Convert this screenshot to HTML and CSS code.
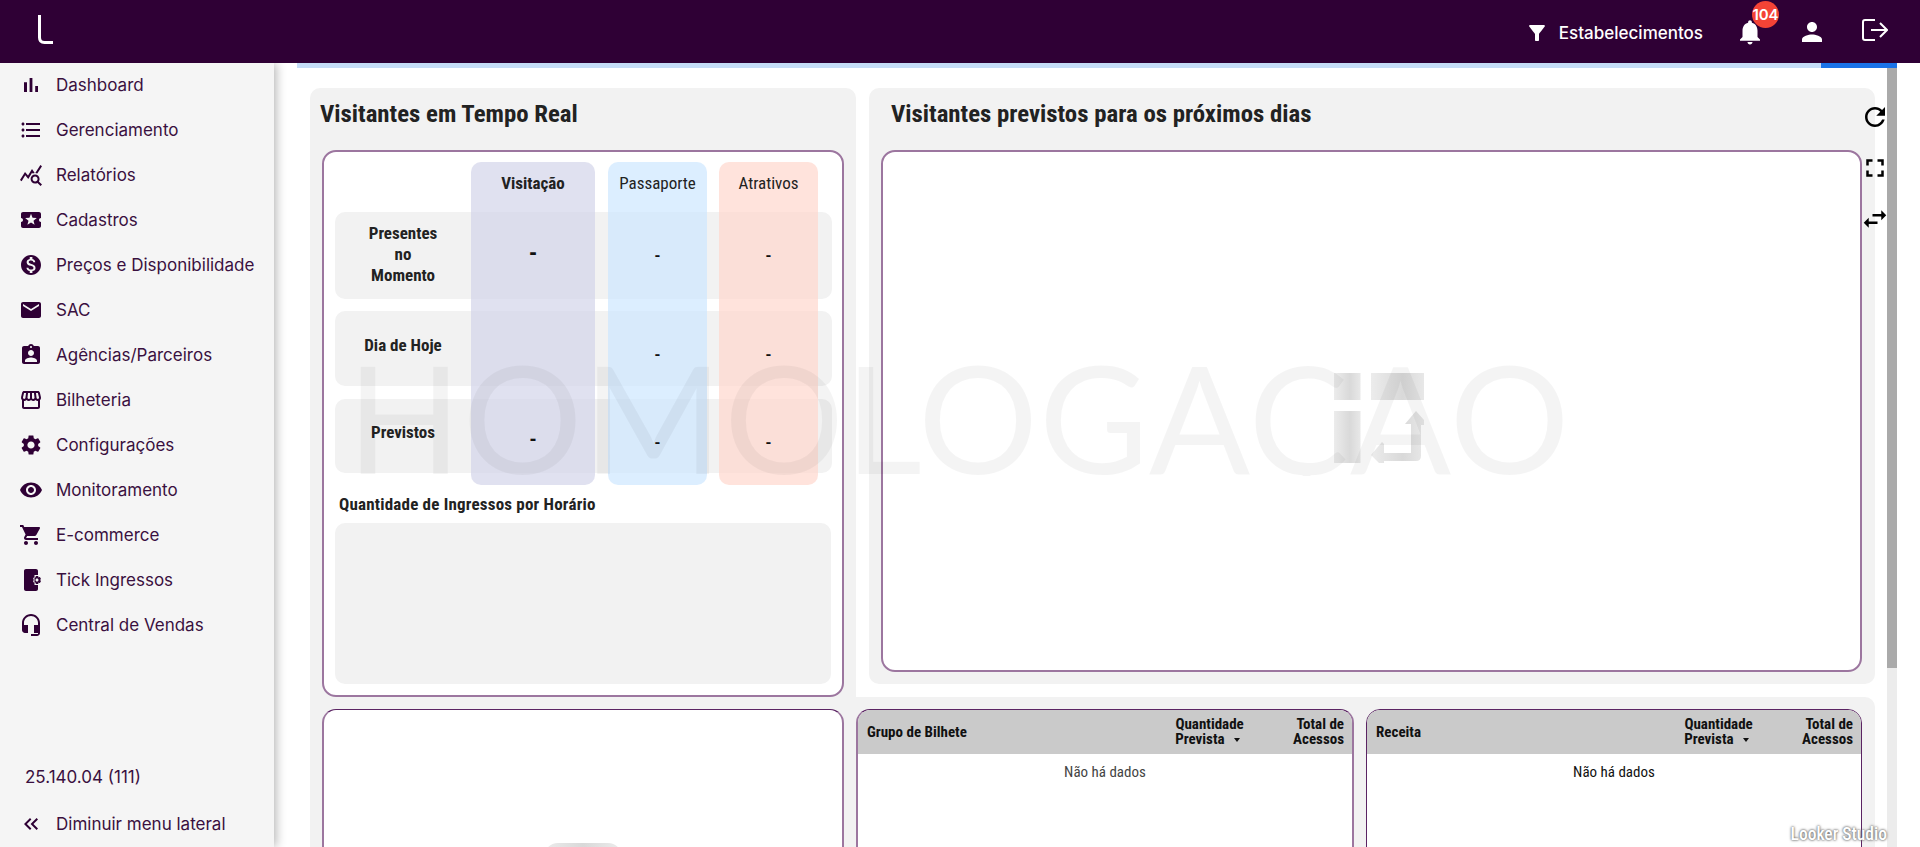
FILE: index.html
```html
<!DOCTYPE html>
<html lang="pt-BR">
<head>
  <meta charset="UTF-8" />
  <title>Dashboard</title>
  <link rel="stylesheet" href="styles.css">
</head>
<body>
  <header class="topbar">
    <svg class="logo" viewBox="0 0 15 29"><path d="M1.5 0v22.5q0 5 5 5H15" /></svg>
    <div class="topbar-actions">
      <button class="filter-btn">
        <svg class="icon" viewBox="0 0 24 24"><path d="M4.25 5.61C6.27 8.2 10 13 10 13v6c0 .55.45 1 1 1h2c.55 0 1-.45 1-1v-6s3.72-4.8 5.74-7.39c.51-.66.04-1.61-.79-1.61H5.04c-.83 0-1.3.95-.79 1.61z"/></svg>
        Estabelecimentos
      </button>
      <div class="bell">
        <svg class="icon-lg" viewBox="0 0 24 24"><path d="M12 22c1.1 0 2-.9 2-2h-4c0 1.1.89 2 2 2zm6-6v-5c0-3.07-1.64-5.64-4.5-6.32V4c0-.83-.67-1.5-1.5-1.5s-1.5.67-1.5 1.5v.68C7.63 5.36 6 7.92 6 11v5l-2 2v1h16v-1l-2-2z"/></svg>
        <span class="badge">104</span>
      </div>
      <svg class="icon-lg user" viewBox="0 0 24 24"><path d="M12 12c2.21 0 4-1.79 4-4s-1.79-4-4-4-4 1.79-4 4 1.79 4 4 4zm0 2c-2.67 0-8 1.34-8 4v2h16v-2c0-2.66-5.33-4-8-4z"/></svg>
      <svg class="logout" viewBox="0 0 26 22"><path d="M13 1H3q-2 0-2 2v16q0 2 2 2h10M9 11h16M18 4l7 7-7 7" /></svg>
    </div>
  </header>

  <div class="layout">
    <aside class="sidebar">
      <nav class="menu">
        <a class="menu-item"><svg viewBox="0 0 24 24"><path d="M5 9.2h3V19H5zM10.6 5h2.8v14h-2.8zm5.6 8H19v6h-2.8z"/></svg>Dashboard</a>
        <a class="menu-item"><svg viewBox="0 0 24 24"><path d="M4 10.5c-.83 0-1.5.67-1.5 1.5s.67 1.5 1.5 1.5 1.5-.67 1.5-1.5-.67-1.5-1.5-1.5zm0-6c-.83 0-1.5.67-1.5 1.5S3.17 7.5 4 7.5 5.5 6.83 5.5 6 4.83 4.5 4 4.5zm0 12c-.83 0-1.5.68-1.5 1.5s.68 1.5 1.5 1.5 1.5-.68 1.5-1.5-.67-1.5-1.5-1.5zM7 19h14v-2H7v2zm0-6h14v-2H7v2zm0-8v2h14V5H7z"/></svg>Gerenciamento</a>
        <a class="menu-item"><svg viewBox="0 0 24 24"><path d="M19.88 18.47c.44-.7.7-1.51.7-2.39 0-2.49-2.01-4.5-4.5-4.5s-4.5 2.01-4.5 4.5 2.01 4.5 4.49 4.5c.88 0 1.7-.26 2.39-.7L21.58 23 23 21.58l-3.12-3.11zm-3.8.11c-1.38 0-2.5-1.12-2.5-2.5s1.12-2.5 2.5-2.5 2.5 1.12 2.5 2.5-1.12 2.5-2.5 2.5zm-.36-8.5c-.74.02-1.45.18-2.1.45l-.55-.83-3.8 6.18-3.01-3.52-3.63 5.81L1 17l5-8 3 3.5L13 6l2.72 4.08zm2.59.5c-.64-.28-1.33-.45-2.05-.49L21.38 2 23 3.18l-4.69 7.4z"/></svg>Relatórios</a>
        <a class="menu-item"><svg viewBox="0 0 24 24"><path d="M20 12c0-1.1.9-2 2-2V6c0-1.1-.9-2-2-2H4c-1.1 0-1.99.9-1.99 2v4c1.1 0 1.99.9 1.99 2s-.89 2-2 2v4c0 1.1.9 2 2 2h16c1.1 0 2-.9 2-2v-4c-1.1 0-2-.9-2-2zm-4.42 4.8L12 14.5l-3.58 2.3 1.08-4.12-3.29-2.69 4.24-.25L12 5.8l1.54 3.95 4.24.25-3.29 2.69 1.09 4.11z"/></svg>Cadastros</a>
        <a class="menu-item"><svg viewBox="0 0 24 24"><path d="M12 2C6.48 2 2 6.48 2 12s4.48 10 10 10 10-4.48 10-10S17.52 2 12 2zm1.41 16.09V20h-2.67v-1.93c-1.71-.36-3.16-1.46-3.27-3.4h1.96c.1 1.05.82 1.87 2.65 1.87 1.96 0 2.4-.98 2.4-1.59 0-.83-.44-1.61-2.67-2.14-2.48-.6-4.18-1.62-4.18-3.67 0-1.72 1.39-2.84 3.11-3.21V4h2.67v1.95c1.86.45 2.79 1.86 2.85 3.39H14.3c-.05-1.11-.64-1.87-2.22-1.87-1.5 0-2.4.68-2.4 1.64 0 .84.65 1.39 2.67 1.91s4.18 1.39 4.18 3.91c-.01 1.83-1.38 2.83-3.12 3.16z"/></svg>Preços e Disponibilidade</a>
        <a class="menu-item"><svg viewBox="0 0 24 24"><path d="M20 4H4c-1.1 0-1.99.9-1.99 2L2 18c0 1.1.9 2 2 2h16c1.1 0 2-.9 2-2V6c0-1.1-.9-2-2-2zm0 4l-8 5-8-5V6l8 5 8-5v2z"/></svg>SAC</a>
        <a class="menu-item"><svg viewBox="0 0 24 24"><path d="M19 3h-4.18C14.4 1.84 13.3 1 12 1c-1.3 0-2.4.84-2.82 2H5c-1.1 0-2 .9-2 2v14c0 1.1.9 2 2 2h14c1.1 0 2-.9 2-2V5c0-1.1-.9-2-2-2zm-7 0c.55 0 1 .45 1 1s-.45 1-1 1-1-.45-1-1 .45-1 1-1zm0 4c1.66 0 3 1.34 3 3s-1.34 3-3 3-3-1.34-3-3 1.34-3 3-3zm6 12H6v-1.4c0-2 4-3.1 6-3.1s6 1.1 6 3.1V19z"/></svg>Agências/Parceiros</a>
        <a class="menu-item"><svg viewBox="0 0 24 24"><path d="M21.9 8.89l-1.05-4.37c-.22-.9-1-1.52-1.91-1.52H5.05c-.9 0-1.69.63-1.9 1.52L2.1 8.89c-.24 1.02-.02 2.06.62 2.88.08.11.19.19.28.29V19c0 1.1.9 2 2 2h14c1.1 0 2-.9 2-2v-6.94c.09-.09.2-.18.28-.28.64-.82.87-1.87.62-2.89zm-2.99-3.9l1.05 4.37c.1.42.01.84-.25 1.17-.14.18-.44.47-.94.47-.61 0-1.14-.49-1.21-1.14L16.98 5l1.93-.01zM13 5h1.96l.54 4.52c.05.39-.07.78-.33 1.07-.22.26-.54.41-.95.41-.67 0-1.22-.59-1.22-1.31V5zM8.49 9.52L9.04 5H11v4.69c0 .72-.55 1.31-1.29 1.31-.34 0-.65-.15-.89-.41-.25-.29-.37-.68-.33-1.07zm-4.45-.16L5.05 5h1.97l-.58 4.86c-.08.65-.6 1.14-1.21 1.14-.49 0-.8-.29-.93-.47-.27-.32-.36-.75-.26-1.17zM5 19v-6.03c.08.01.15.03.23.03.87 0 1.66-.36 2.24-.95.6.6 1.4.95 2.31.95.87 0 1.65-.36 2.23-.93.59.57 1.39.93 2.29.93.84 0 1.64-.35 2.24-.95.58.59 1.37.95 2.24.95.08 0 .15-.02.23-.03V19H5z"/></svg>Bilheteria</a>
        <a class="menu-item"><svg viewBox="0 0 24 24"><path d="M19.14 12.94c.04-.3.06-.61.06-.94 0-.32-.02-.64-.07-.94l2.03-1.58c.18-.14.23-.41.12-.61l-1.92-3.32c-.12-.22-.37-.29-.59-.22l-2.39.96c-.5-.38-1.03-.7-1.62-.94l-.36-2.54c-.04-.24-.24-.41-.48-.41h-3.84c-.24 0-.43.17-.47.41l-.36 2.54c-.59.24-1.13.57-1.62.94l-2.39-.96c-.22-.08-.47 0-.59.22L2.74 8.87c-.12.21-.08.47.12.61l2.03 1.58c-.05.3-.09.63-.09.94s.02.64.07.94l-2.03 1.58c-.18.14-.23.41-.12.61l1.92 3.32c.12.22.37.29.59.22l2.39-.96c.5.38 1.03.7 1.62.94l.36 2.54c.05.24.24.41.48.41h3.84c.24 0 .44-.17.47-.41l.36-2.54c.59-.24 1.13-.56 1.62-.94l2.39.96c.22.08.47 0 .59-.22l1.92-3.32c.12-.22.07-.47-.12-.61l-2.01-1.58zM12 15.6c-1.98 0-3.6-1.62-3.6-3.6s1.62-3.6 3.6-3.6 3.6 1.62 3.6 3.6-1.62 3.6-3.6 3.6z"/></svg>Configurações</a>
        <a class="menu-item"><svg viewBox="0 0 24 24"><path d="M12 4.5C7 4.5 2.73 7.61 1 12c1.73 4.39 6 7.5 11 7.5s9.27-3.11 11-7.5c-1.73-4.39-6-7.5-11-7.5zM12 17c-2.76 0-5-2.24-5-5s2.24-5 5-5 5 2.24 5 5-2.24 5-5 5zm0-8c-1.66 0-3 1.34-3 3s1.34 3 3 3 3-1.34 3-3-1.34-3-3-3z"/></svg>Monitoramento</a>
        <a class="menu-item"><svg viewBox="0 0 24 24"><path d="M7 18c-1.1 0-1.99.9-1.99 2S5.9 22 7 22s2-.9 2-2-.9-2-2-2zM1 2v2h2l3.6 7.59-1.35 2.45c-.16.28-.25.61-.25.96 0 1.1.9 2 2 2h12v-2H7.42c-.14 0-.25-.11-.25-.25l.03-.12.9-1.63h7.45c.75 0 1.41-.41 1.75-1.03l3.58-6.47c.08-.14.12-.31.12-.48 0-.55-.45-1-1-1H5.21l-.94-2H1zm16 16c-1.1 0-1.99.9-1.99 2s.89 2 1.99 2 2-.9 2-2-.9-2-2-2z"/></svg>E-commerce</a>
        <a class="menu-item"><svg viewBox="0 0 24 24"><path d="M7 1h10c1.1 0 2 .9 2 2v4h-3.500v10H19v4c0 1.100-.9 2-2 2H7c-1.100 0-2-.9-2-2V3c0-1.100.9-2 2-2zM21.810 12.740l-.82-.63v-.22l.8-.63c.16-.12.2-.34.1-.51l-.85-1.480c-.08-.16-.3-.23-.5-.17l-.95.38-.19-.11-.15-1.010c-.03-.21-.2-.36-.4-.36h-1.710c-.2 0-.37.15-.4.34l-.14 1.010-.19.11-.95-.38c-.2-.06-.4 0-.5.17l-.85 1.480c-.1.17-.06.39.1.51l.8.63v.23l-.8.63c-.16.12-.2.34-.1.51l.85 1.480c.1.17.3.23.5.17l.95-.37.2.11.15 1.010c.03.2.2.34.4.34h1.710c.2 0 .37-.15.4-.34l.15-1.010.19-.11.95.38c.2.06.4 0 .5-.17l.85-1.480c.1-.17.06-.39-.1-.51zM18 13.500c-.83 0-1.500-.67-1.500-1.500s.67-1.500 1.500-1.500 1.500.67 1.500 1.500-.67 1.500-1.500 1.500z"/></svg>Tick Ingressos</a>
        <a class="menu-item"><svg viewBox="0 0 24 24"><path d="M12 1c-4.97 0-9 4.03-9 9v7c0 1.66 1.34 3 3 3h3v-8H5v-2c0-3.87 3.13-7 7-7s7 3.13 7 7v2h-4v8h4v1h-7v2h6c1.66 0 3-1.34 3-3V10c0-4.97-4.03-9-9-9z"/></svg>Central de Vendas</a>
      </nav>
      <div class="version">25.140.04 (111)</div>
      <a class="menu-item collapse"><svg viewBox="0 0 24 24"><path d="M17.59 18L19 16.59 14.42 12 19 7.41 17.59 6l-6 6zM11 18l1.41-1.41L7.83 12l4.58-4.59L11 6l-6 6z"/></svg>Diminuir menu lateral</a>
    </aside>

    <main class="main">
      <div class="progress"><div class="progress-fill"></div></div>
      <div class="frame">
        <div class="report">
          <section class="panel panel-left">
            <h2 class="panel-title">Visitantes em Tempo Real</h2>
            <div class="card card-realtime">
              <div class="realtime-grid">
                <div class="row-bg row-a"></div>
                <div class="row-bg row-b"></div>
                <div class="row-bg row-c"></div>
                <div class="col-bg col-a"></div>
                <div class="col-bg col-b"></div>
                <div class="col-bg col-c"></div>

                <div class="head head-a">Visitação</div>
                <div class="head head-b">Passaporte</div>
                <div class="head head-c">Atrativos</div>

                <div class="label label-a">Presentes<br>no<br>Momento</div>
                <div class="label label-b">Dia de Hoje</div>
                <div class="label label-c">Previstos</div>

                <div class="value big cell-a1">-</div>
                <div class="value cell-b1">-</div>
                <div class="value cell-c1">-</div>
                <div class="value cell-b2">-</div>
                <div class="value cell-c2">-</div>
                <div class="value mid cell-a3">-</div>
                <div class="value cell-b3">-</div>
                <div class="value cell-c3">-</div>
              </div>
              <h3 class="hours-title">Quantidade de Ingressos por Horário</h3>
              <div class="hours-chart"></div>
            </div>
            <div class="card card-loading"><div class="loader-peek"></div></div>
          </section>

          <div class="right-col">
            <section class="panel panel-forecast">
              <h2 class="panel-title">Visitantes previstos para os próximos dias</h2>
              <div class="card card-forecast">
                <svg class="loader" viewBox="0 0 90 90">
                  <defs>
                    <linearGradient id="fade">
                      <stop offset="0" stop-color="#ececec"/>
                      <stop offset=".6" stop-color="#d9d9d9"/>
                      <stop offset="1" stop-color="#e8e8e8"/>
                    </linearGradient>
                  </defs>
                  <path fill="url(#fade)" d="M0 0h26.500v27H0zM0 38h26.500v52H0z"/>
                  <path fill="url(#fade)" d="M37 0h53v27H37z"/>
                  <path fill="url(#fade)" d="M82 38l8 9v5h-3v31q0 5-5 5H50v2h-5l-8-8 11-13 2 2v9h27V51h-6z"/>
                </svg>
              </div>
            </section>
            <section class="panel panel-tables">
              <div class="card card-table">
                <div class="table-head">
                  <span class="th-name">Grupo de Bilhete</span>
                  <span class="th-qty">Quantidade<br>Prevista <i class="sort"></i></span>
                  <span class="th-total">Total de<br>Acessos</span>
                </div>
                <p class="no-data">Não há dados</p>
              </div>
              <div class="card card-table card-table-dark">
                <div class="table-head">
                  <span class="th-name">Receita</span>
                  <span class="th-qty">Quantidade<br>Prevista <i class="sort"></i></span>
                  <span class="th-total">Total de<br>Acessos</span>
                </div>
                <p class="no-data">Não há dados</p>
              </div>
            </section>
          </div>
        </div>
        <div class="scrollbar"><div class="scrollbar-thumb"></div></div>

        <div class="report-tools">
          <svg viewBox="0 0 24 24"><path d="M17.65 6.35C16.2 4.9 14.21 4 12 4c-4.42 0-7.99 3.58-7.99 8s3.57 8 7.99 8c3.730 0 6.84-2.55 7.73-6h-2.08c-.82 2.33-3.04 4-5.65 4-3.31 0-6-2.69-6-6s2.69-6 6-6c1.66 0 3.14.69 4.22 1.78L13 11h7V4l-2.35 2.35z"/></svg>
          <svg viewBox="0 0 24 24"><path d="M7 14H5v5h5v-2H7v-3zm-2-4h2V7h3V5H5v5zm12 7h-3v2h5v-5h-2v3zM14 5v2h3v3h2V5h-5z"/></svg>
          <svg viewBox="0 0 24 24"><path d="M6.990 11L3 15l3.990 4v-3H14v-2H6.990v-3zM21 9l-3.990-4v3H10v2h7.010v3L21 9z"/></svg>
        </div>
        <div class="looker-tag">Looker Studio</div>
      </div>
    </main>
  </div>

  <div class="watermark">HOMOLOGAÇÃO</div>
</body>
</html>
```

FILE: styles.css
```css
* {
  box-sizing: border-box;
}

html, body {
  margin: 0;
  height: 100%;
  overflow: hidden;
  background: #fff;
}

body {
  display: flex;
  flex-direction: column;
  font-family: 'Roboto', 'Liberation Sans', sans-serif;
}

/* top bar */
.topbar {
  height: 63px;
  flex: none;
  background: #2f0035;
  display: flex;
  align-items: center;
  justify-content: space-between;
  padding: 0 32px 0 38px;
  position: relative;
  z-index: 3;
}

.logo {
  width: 15px;
  height: 29px;
  margin-top: -4px;
  fill: none;
  stroke: #fff;
  stroke-width: 3;
  stroke-linecap: round;
}

.topbar-actions {
  display: flex;
  align-items: center;
  color: #fff;
  fill: #fff;
}

.filter-btn {
  display: flex;
  align-items: center;
  gap: 10px;
  background: none;
  border: none;
  padding: 0;
  color: #fff;
  fill: #fff;
  font-family: 'Inter', sans-serif;
  font-size: 17px;
  font-weight: 500;
  margin-top: 3px;
}

.icon {
  width: 24px;
  height: 24px;
}

.icon-lg {
  width: 30px;
  height: 30px;
  display: block;
}

.bell {
  position: relative;
  margin-left: 32px;
}

.badge {
  position: absolute;
  top: -16px;
  left: 17px;
  width: 27px;
  height: 27px;
  border-radius: 50%;
  background: #f44336;
  color: #fff;
  font-family: 'Inter', sans-serif;
  font-size: 15px;
  font-weight: 600;
  line-height: 27px;
  text-align: center;
}

.user {
  margin-left: 32px;
}

.logout {
  width: 26px;
  height: 22px;
  margin-left: 35px;
  margin-top: -3px;
  fill: none;
  stroke: #fff;
  stroke-width: 2;
}

/* sidebar */
.layout {
  flex: 1;
  display: flex;
  min-height: 0;
}

.sidebar {
  width: 274px;
  flex: none;
  background: #f5f5f5;
  box-shadow: 2px 0 10px rgba(0, 0, 0, 0.3);
  display: flex;
  flex-direction: column;
  position: relative;
  z-index: 2;
}

.menu {
  flex: 1;
  margin-top: -1px;
}

.menu-item {
  height: 45px;
  display: flex;
  align-items: center;
  gap: 13px;
  padding-left: 19px;
  color: #3a1040;
  fill: #2f0035;
  font-family: 'Inter', sans-serif;
  font-size: 17px;
}

.menu-item svg {
  width: 24px;
  height: 24px;
  flex: none;
}

.version {
  padding-left: 25px;
  margin-bottom: 14px;
  font-family: 'Inter', sans-serif;
  font-size: 17px;
  color: #3a1040;
}

.collapse {
  margin-bottom: 1px;
}

/* main area */
.main {
  flex: 1;
  min-width: 0;
  margin: 0 23px;
  display: flex;
  flex-direction: column;
}

.progress {
  height: 5px;
  flex: none;
  background: #c5dcf7;
  display: flex;
  justify-content: flex-end;
}

.progress-fill {
  width: 76px;
  background: #1a73e8;
}

.frame {
  flex: 1;
  min-height: 0;
  display: flex;
  position: relative;
  overflow: hidden;
}

.report {
  flex: 1;
  display: flex;
  padding: 20px 12px 0 13px;
  min-width: 0;
}

.scrollbar {
  width: 10px;
  flex: none;
  background: #ececec;
}

.scrollbar-thumb {
  height: 600px;
  background: #aaa;
}

.panel {
  background: #f2f2f2;
  border-radius: 10px;
}

.panel-left {
  width: 546px;
  flex: none;
  height: 900px;
  padding: 0 12px;
  border-radius: 10px 10px 0 0;
}

.panel-title {
  margin: 0;
  height: 62px;
  padding: 11px 0 0;
  line-height: 30px;
  font-size: 24.8px;
  font-weight: 700;
  font-stretch: 75%;
  color: #222;
}

.panel-left .panel-title {
  margin-left: -2px;
}

.right-col {
  flex: 1;
  min-width: 0;
  display: flex;
  flex-direction: column;
  gap: 13px;
}

.panel-forecast {
  height: 596px;
  flex: none;
  margin-left: 13px;
  padding: 0 13px 0 12px;
}

.panel-forecast .panel-title {
  padding-left: 10px;
}

.panel-tables {
  height: 200px;
  flex: none;
  padding: 12px 13px 0 0;
  border-radius: 0 10px 0 0;
  display: flex;
  gap: 12px;
}

.card {
  background: #fff;
  border: 2px solid #9c769f;
  border-radius: 14px;
}

.card-realtime {
  height: 547px;
  padding: 10px 11px 0;
}

.card-loading {
  height: 300px;
  margin-top: 12px;
  border-top: 1px solid #5b2463;
  display: flex;
  justify-content: center;
  padding-top: 133px;
}

.loader-peek {
  width: 78px;
  height: 30px;
  border-radius: 14px 14px 0 0;
  background: linear-gradient(to right, #ececec, #d9d9d9, #ececec);
}

.card-forecast {
  height: 522px;
  display: flex;
  align-items: center;
  justify-content: center;
  padding: 14px 0 0 14px;
}

.loader {
  width: 90px;
  height: 90px;
  filter: blur(0.5px);
}

/* realtime table */
.realtime-grid {
  display: grid;
  grid-template-columns: 136px 124px 13px 99px 12px 99px 14px;
  grid-template-rows: 50px 87px 12px 75px 13px 74px 12px;
  color: #222;
  font-stretch: 75%;
}

.row-bg {
  grid-column: 1 / -1;
  background: #f2f2f2;
  border-radius: 10px;
}

.row-a { grid-row: 2; }
.row-b { grid-row: 4; }
.row-c { grid-row: 6; }

.col-bg {
  grid-row: 1 / -1;
  border-radius: 10px;
}

.col-a { grid-column: 2; background: rgba(211, 212, 234, 0.7); }
.col-b { grid-column: 4; background: rgba(205, 231, 255, 0.7); }
.col-c { grid-column: 6; background: rgba(255, 215, 205, 0.7); }

.head,
.label,
.value {
  display: flex;
  align-items: center;
  justify-content: center;
  text-align: center;
  font-size: 17px;
}

.head {
  grid-row: 1;
  padding-bottom: 8px;
}

.head-a { grid-column: 2; font-weight: 700; }
.head-b { grid-column: 4; }
.head-c { grid-column: 6; }

.label {
  grid-column: 1;
  font-weight: 700;
  line-height: 21px;
}

.label-a { grid-row: 2; padding-bottom: 2px; }
.label-b { grid-row: 4; padding-bottom: 7px; }
.label-c { grid-row: 6; padding-bottom: 8px; }

.value {
  font-size: 19px;
  font-weight: 500;
  color: #111;
}

.big {
  font-size: 24px;
  font-weight: 700;
}

.mid {
  font-size: 21px;
  font-weight: 700;
}

.cell-a1 { grid-column: 2; grid-row: 2; padding-bottom: 6px; }
.cell-b1 { grid-column: 4; grid-row: 2; }
.cell-c1 { grid-column: 6; grid-row: 2; }
.cell-b2 { grid-column: 4; grid-row: 4; padding-top: 11px; }
.cell-c2 { grid-column: 6; grid-row: 4; padding-top: 11px; }
.cell-a3 { grid-column: 2; grid-row: 6; padding-top: 6px; }
.cell-b3 { grid-column: 4; grid-row: 6; padding-top: 12px; }
.cell-c3 { grid-column: 6; grid-row: 6; padding-top: 12px; }

.hours-title {
  margin: 0;
  height: 38px;
  padding-left: 4px;
  line-height: 38px;
  font-size: 17px;
  font-weight: 700;
  font-stretch: 75%;
  letter-spacing: 0.2px;
  color: #222;
}

.hours-chart {
  height: 161px;
  background: #f2f2f2;
  border-radius: 10px;
}

/* bottom tables */
.card-table {
  flex: 1;
  height: 200px;
  overflow: hidden;
  border-width: 1px 2px 2px;
  border-top-color: #5b2463;
}

.card-table-dark {
  border-width: 1px;
  border-color: #5b2463;
}

.table-head {
  height: 44px;
  background: #cacaca;
  display: flex;
  align-items: center;
  padding: 0 8px 0 9px;
  line-height: 15px;
  font-size: 15px;
  font-weight: 700;
  font-stretch: 75%;
  color: #111;
}

.th-name {
  flex: 1;
}

.th-qty {
  text-align: center;
  margin-right: 49px;
}

.th-total {
  text-align: right;
}

.sort {
  display: inline-block;
  width: 0;
  height: 0;
  margin: 0 4px 2px 6px;
  border: 3px solid transparent;
  border-top: 4px solid #111;
  border-bottom: 0;
}

.no-data {
  margin: 9px 0 0;
  text-align: center;
  font-size: 15px;
  font-stretch: 75%;
  color: #444;
}

.card-table-dark .no-data {
  color: #111;
}

/* overlays */
.report-tools {
  position: absolute;
  top: 34px;
  left: 1563px;
  display: flex;
  flex-direction: column;
  gap: 21px;
}

.report-tools svg {
  width: 30px;
  height: 30px;
  display: block;
}

.looker-tag {
  position: absolute;
  right: 10px;
  bottom: 3px;
  color: #fff;
  font-size: 17.500px;
  font-weight: 500;
  font-stretch: 75%;
  text-shadow: 0 0 3px #666, 0 0 2px #777;
}

.watermark {
  position: absolute;
  top: 364px;
  left: 347px;
  width: 1240px;
  height: 112px;
  overflow: hidden;
  line-height: 104px;
  font-family: 'Lato', sans-serif;
  font-size: 150px;
  font-weight: 400;
  letter-spacing: 1px;
  color: rgba(0, 0, 0, 0.045);
  white-space: nowrap;
  pointer-events: none;
  z-index: 4;
}
```
